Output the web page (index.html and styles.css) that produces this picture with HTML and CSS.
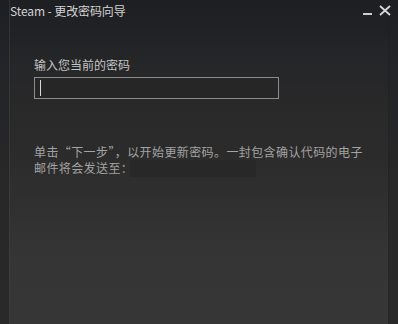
FILE: index.html
```html
<!DOCTYPE html>
<html lang="zh-CN">
<head>
  <meta charset="UTF-8">
  <title>Steam - 更改密码向导</title>
  <link rel="stylesheet" href="styles.css">
</head>
<body>

<div class="window">
  <div class="panel">
    <!-- Titelleiste -->
    <div class="titlebar">
      <span class="title">Steam - 更改密码向导</span>
      <div class="controls">
        <svg class="btn-min" width="10" height="10" viewBox="0 0 10 10">
          <rect x="0" y="7" width="9" height="2" fill="#cfcfcf"/>
        </svg>
        <svg class="btn-close" width="12" height="11" viewBox="0 0 12 11">
          <path d="M1 1 L11 10 M11 1 L1 10" stroke="#d6d6d6" stroke-width="1.8"/>
        </svg>
      </div>
    </div>

    <div class="content">
      <label class="field-label" for="pw">输入您当前的密码</label>
      <div class="input-box">
        <span class="caret"></span>
      </div>

      <p class="hint">单击“下一步”，以开始更新密码。一封包含确认代码的电子邮件将会发送至：<span class="redacted"></span></p>
    </div>
  </div>
</div>

</body>
</html>
```

FILE: styles.css
```css
/* Grundgerüst */
html, body {
  margin: 0;
  padding: 0;
}

body {
  width: 398px;
  height: 324px;
  background: #242424;
  font-family: "Noto Sans CJK SC", "Noto Sans", sans-serif;
  font-size: 12px;
  overflow: hidden;
}

/* Fenster mit dunklem Verlauf */
.window {
  height: 324px;
  padding: 0 9px;
  background: linear-gradient(to bottom, #1e1f23 0px, #232427 60px, #282828 200px, #292929 324px);
  box-sizing: border-box;
}

/* Innenfläche, wird nach unten heller */
.panel {
  height: 100%;
  background: linear-gradient(to bottom, rgba(54,54,54,0) 0px, rgba(54,54,54,0) 30px, #2b2b2b 150px, #353535 260px, #363636 324px);
  border-left: 1px solid rgba(70,70,70,0.5);
  border-right: 1px solid rgba(30,30,30,0.6);
  box-sizing: border-box;
}

/* Titelleiste */
.titlebar {
  display: flex;
  align-items: flex-start;
  justify-content: space-between;
  height: 24px;
}

.title {
  color: #d2d2d2;
  line-height: 16px;
  margin-top: 3px;
  letter-spacing: -0.1px;
}

.controls {
  display: flex;
  align-items: flex-start;
  gap: 6px;
  margin-top: 5px;
  margin-right: -3px;
}

.btn-min {
  margin-top: 1px;
}

/* Inhalt */
.content {
  padding: 33px 0 0 24px;
}

.field-label {
  display: block;
  color: #c4c4c4;
  line-height: 16px;
}

.input-box {
  width: 245px;
  height: 22px;
  margin-top: 4px;
  border: 1px solid #8c8c8c;
  background: #262626;
  box-sizing: border-box;
  position: relative;
}

.caret {
  position: absolute;
  left: 5px;
  top: 2px;
  width: 1px;
  height: 16px;
  background: #d8d8d8;
}

.hint {
  width: 335px;
  margin: 45px 0 0 0;
  color: #a3a3a3;
  line-height: 16px;
  letter-spacing: 0.4px;
}

/* Geschwärzte E-Mail-Adresse */
.redacted {
  display: inline-block;
  width: 126px;
  height: 17px;
  margin-left: -3px;
  vertical-align: -4px;
  background: #282828;
}
```
